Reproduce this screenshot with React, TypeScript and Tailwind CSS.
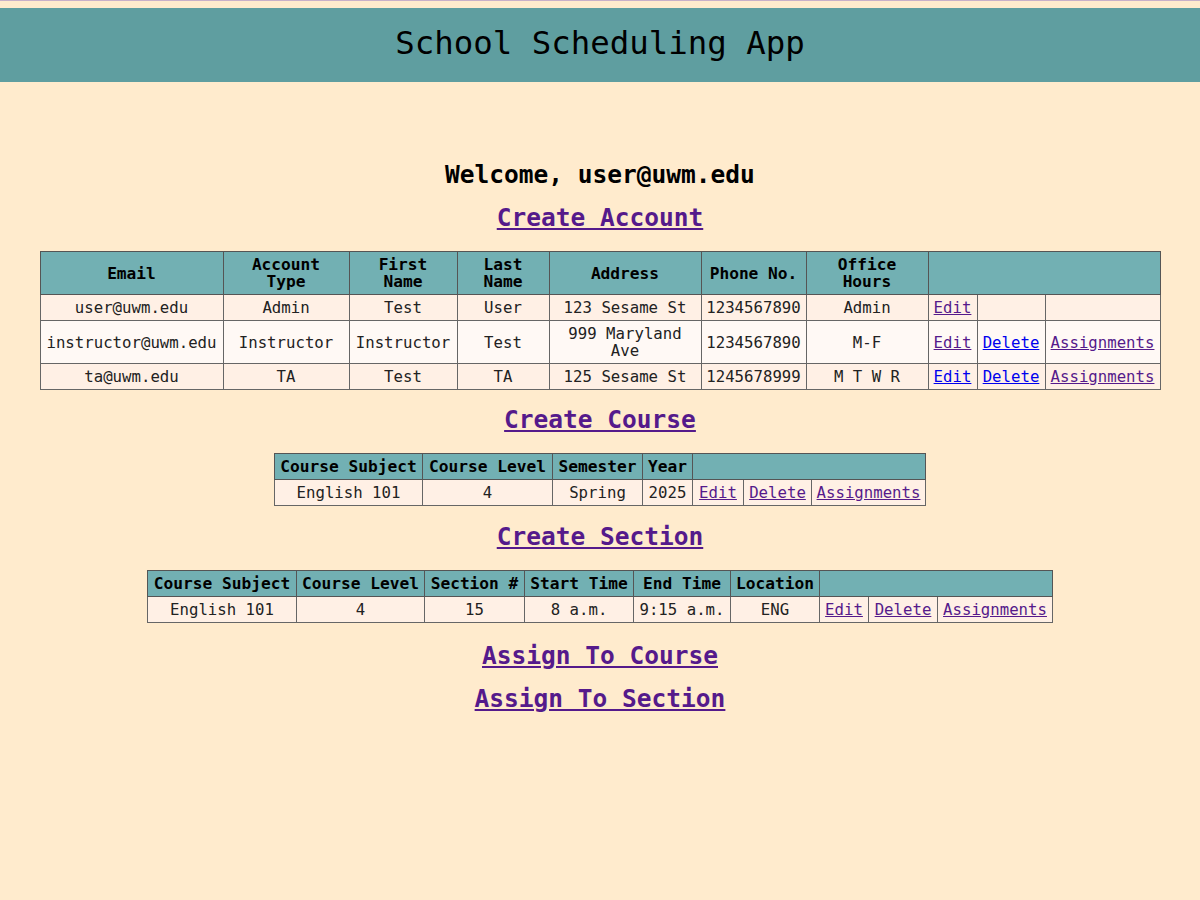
import React from "react";

type Cell = string | { link: string; visited?: boolean } | null;

const mono = "font-['DejaVu_Sans_Mono','Liberation_Mono',monospace]";

function LinkCell({ text, visited = true }: { text: string; visited?: boolean }) {
  return (
    <a href="#" className={visited ? "text-[#551a8b] underline" : "text-[#0000ee] underline"}>
      {text}
    </a>
  );
}

function DataTable({ widths, headers, rows }: { widths: number[]; headers: string[]; rows: Cell[][] }) {
  const total = widths.reduce((a, b) => a + b, 0);
  return (
    <table className="table-fixed border-collapse border border-[#333] mt-[18px]" style={{ width: total }}>
      <colgroup>
        {widths.map((w, i) => (
          <col key={i} style={{ width: w }} />
        ))}
      </colgroup>
      <thead>
        <tr className="bg-[#72b0b3]">
          {headers.map((h, i) => (
            <th
              key={i}
              colSpan={i === headers.length - 1 && h === "" ? widths.length - headers.length + 1 : 1}
              className="border border-[#555] px-[4px] py-[4px] leading-[17px] text-[16.2px] font-bold text-black whitespace-pre-line"
            >
              {h}
            </th>
          ))}
        </tr>
      </thead>
      <tbody>
        {rows.map((r, ri) => (
          <tr key={ri} className={ri % 2 === 0 ? "bg-[#fff0e5]" : "bg-[#fff9f5]"}>
            {r.map((c, ci) => (
              <td
                key={ci}
                className="border border-[#666] px-[4px] py-[4px] leading-[17px] text-[15.7px] text-center text-[#222]"
              >
                {c === null ? "" : typeof c === "string" ? c : <LinkCell text={c.link} visited={c.visited} />}
              </td>
            ))}
          </tr>
        ))}
      </tbody>
    </table>
  );
}

function PageLink({ children, className = "" }: { children: React.ReactNode; className?: string }) {
  return (
    <a href="#" className={`block h-[30px] leading-[30px] text-[24.5px] font-bold text-[#551a8b] underline ${className}`}>
      {children}
    </a>
  );
}

export default function App() {
  return (
    <div className={`min-h-[900px] bg-[#ffebcd] ${mono} text-black`}>
      <div className="h-px bg-[#c8b0c8]" />
      <header className="mt-[7px] h-[74px] bg-[#5f9ea0] flex items-center justify-center pb-[4px]">
        <h1 className="text-[32.4px] font-normal">School Scheduling App</h1>
      </header>
      <main className="flex flex-col items-center pt-[78px] pb-10">
        <h2 className="h-[30px] leading-[30px] text-[24.5px] font-bold">Welcome, user@uwm.edu</h2>
        <PageLink className="mt-[13px]">Create Account</PageLink>
        <DataTable
          widths={[183, 126, 108, 92, 152, 105, 122, 49, 68, 115]}
          headers={["Email", "Account\nType", "First\nName", "Last\nName", "Address", "Phone No.", "Office\nHours", ""]}
          rows={[
            ["user@uwm.edu", "Admin", "Test", "User", "123 Sesame St", "1234567890", "Admin", { link: "Edit" }, null, null],
            [
              "instructor@uwm.edu",
              "Instructor",
              "Instructor",
              "Test",
              "999 Maryland Ave",
              "1234567890",
              "M-F",
              { link: "Edit" },
              { link: "Delete", visited: false },
              { link: "Assignments" },
            ],
            [
              "ta@uwm.edu",
              "TA",
              "Test",
              "TA",
              "125 Sesame St",
              "1245678999",
              "M T W R",
              { link: "Edit", visited: false },
              { link: "Delete", visited: false },
              { link: "Assignments" },
            ],
          ]}
        />
        <PageLink className="mt-[15px]">Create Course</PageLink>
        <DataTable
          widths={[148, 130, 90, 50, 51, 68, 114]}
          headers={["Course Subject", "Course Level", "Semester", "Year", ""]}
          rows={[["English 101", "4", "Spring", "2025", { link: "Edit" }, { link: "Delete" }, { link: "Assignments" }]]}
        />
        <PageLink className="mt-[16px]">Create Section</PageLink>
        <DataTable
          widths={[149, 128, 100, 109, 97, 89, 49, 69, 115]}
          headers={["Course Subject", "Course Level", "Section #", "Start Time", "End Time", "Location", ""]}
          rows={[
            ["English 101", "4", "15", "8 a.m.", "9:15 a.m.", "ENG", { link: "Edit" }, { link: "Delete" }, { link: "Assignments" }],
          ]}
        />
        <PageLink className="mt-[18px]">Assign To Course</PageLink>
        <PageLink className="mt-[13px]">Assign To Section</PageLink>
      </main>
    </div>
  );
}
